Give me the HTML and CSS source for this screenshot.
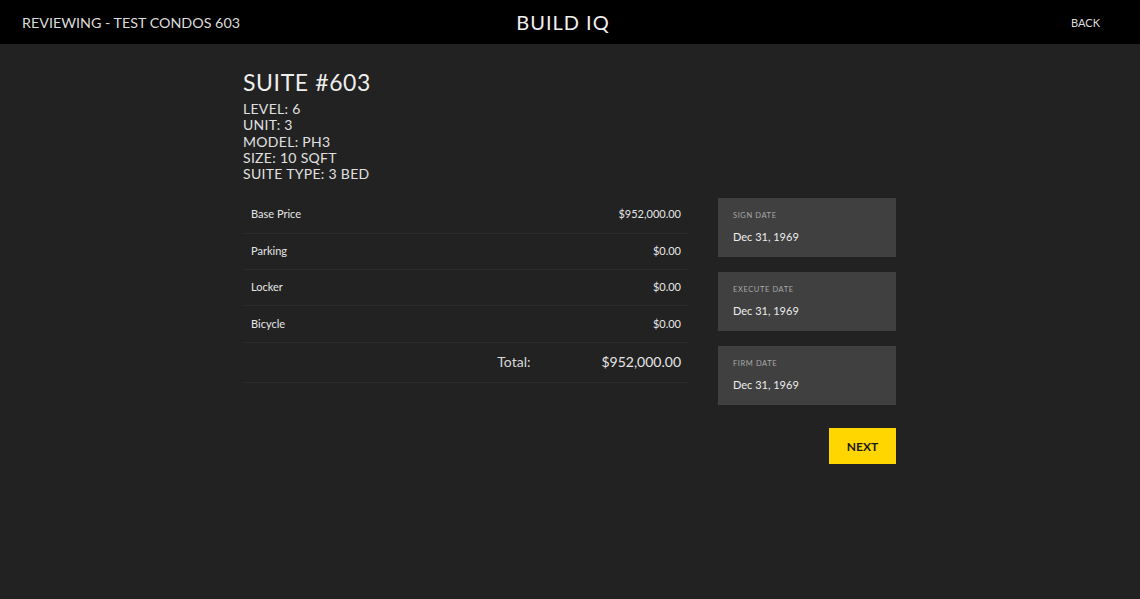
FILE: index.html
```html
<!DOCTYPE html>
<html>
<head>
<meta charset="utf-8">
<link rel="stylesheet" href="styles.css">
</head>
<body>
<header class="topbar">
  <div class="topbar-left">REVIEWING - TEST CONDOS 603</div>
  <div class="topbar-brand">BUILD IQ</div>
  <div class="topbar-right"><a class="back">BACK</a></div>
</header>
<main class="page">
  <section class="suite">
    <h1 class="suite-title">SUITE #603</h1>
    <div class="suite-meta">
      <div>LEVEL: 6</div>
      <div>UNIT: 3</div>
      <div>MODEL: PH3</div>
      <div>SIZE: 10 SQFT</div>
      <div>SUITE TYPE: 3 BED</div>
    </div>
  </section>
  <section class="content">
    <div class="prices">
      <div class="row"><span>Base Price</span><span>$952,000.00</span></div>
      <div class="row"><span>Parking</span><span>$0.00</span></div>
      <div class="row"><span>Locker</span><span>$0.00</span></div>
      <div class="row"><span>Bicycle</span><span>$0.00</span></div>
      <div class="row total"><span class="total-label">Total:</span><span class="total-value">$952,000.00</span></div>
    </div>
    <div class="dates">
      <div class="date-box"><div class="date-label">SIGN DATE</div><div class="date-value">Dec 31, 1969</div></div>
      <div class="date-box"><div class="date-label">EXECUTE DATE</div><div class="date-value">Dec 31, 1969</div></div>
      <div class="date-box"><div class="date-label">FIRM DATE</div><div class="date-value">Dec 31, 1969</div></div>
      <div class="actions"><button class="next">NEXT</button></div>
    </div>
  </section>
</main>
</body>
</html>
```

FILE: styles.css
```css
* { box-sizing: border-box; }
html, body { margin: 0; padding: 0; }
body {
  background: #222222;
  color: #e6e6e6;
  font-family: "Lato", "Open Sans", sans-serif;
  height: 599px;
  overflow: hidden;
}
.topbar {
  height: 44px;
  background: #000;
  display: grid;
  grid-template-columns: 1fr auto 1fr;
  align-items: center;
  padding: 0 40px 0 22px;
}
.topbar-left {
  font-size: 14.3px;
  color: #dcdcdc;
}
.topbar-brand {
  font-size: 20px;
  letter-spacing: 1px;
  color: #f0f0f0;
  position: relative;
  left: 2px;
}
.topbar-right { text-align: right; }
.back {
  font-size: 11px;
  color: #dcdcdc;
  position: relative;
  top: -2px;
}
.page {
  width: 653px;
  margin-left: calc(50% - 327px);
  padding-top: 24px;
}
.suite-title {
  margin: 0;
  font-weight: 400;
  font-size: 23px;
  letter-spacing: 0.6px;
  line-height: 28px;
  color: #eeeeee;
}
.suite-meta {
  margin-top: 5px;
  font-size: 14px;
  line-height: 16.25px;
  letter-spacing: 0.3px;
  color: #e0e0e0;
}
.content {
  display: flex;
  align-items: flex-start;
  gap: 31px;
  margin-top: 15px;
}
.prices { width: 444px; }
.row {
  display: flex;
  justify-content: space-between;
  align-items: center;
  height: 36.4px;
  padding: 0 6px 2px 8px;
  border-bottom: 1px solid #2c2c2c;
  font-size: 11px;
  color: #e6e6e6;
}
.row.total {
  height: 40px;
  justify-content: flex-end;
}
.total-label {
  font-size: 14px;
  margin-right: 71px;
  color: #d8d8d8;
}
.total-value {
  font-size: 14px;
  color: #e6e6e6;
}
.dates {
  width: 178px;
  display: flex;
  flex-direction: column;
  gap: 15px;
  margin-top: 1px;
}
.date-box {
  background: #404040;
  height: 59px;
  padding: 13px 15px 0;
}
.date-label {
  font-size: 7.5px;
  letter-spacing: 0.6px;
  color: #a8a8a8;
}
.date-value {
  margin-top: 10px;
  font-size: 11px;
  font-weight: 400;
  color: #ececec;
}
.actions {
  display: flex;
  justify-content: flex-end;
  margin-top: 8px;
}
.next {
  width: 67px;
  height: 36px;
  background: #ffd600;
  border: none;
  font-family: inherit;
  font-size: 12px;
  font-weight: 700;
  color: #1a1a1a;
  padding: 0;
}
```
